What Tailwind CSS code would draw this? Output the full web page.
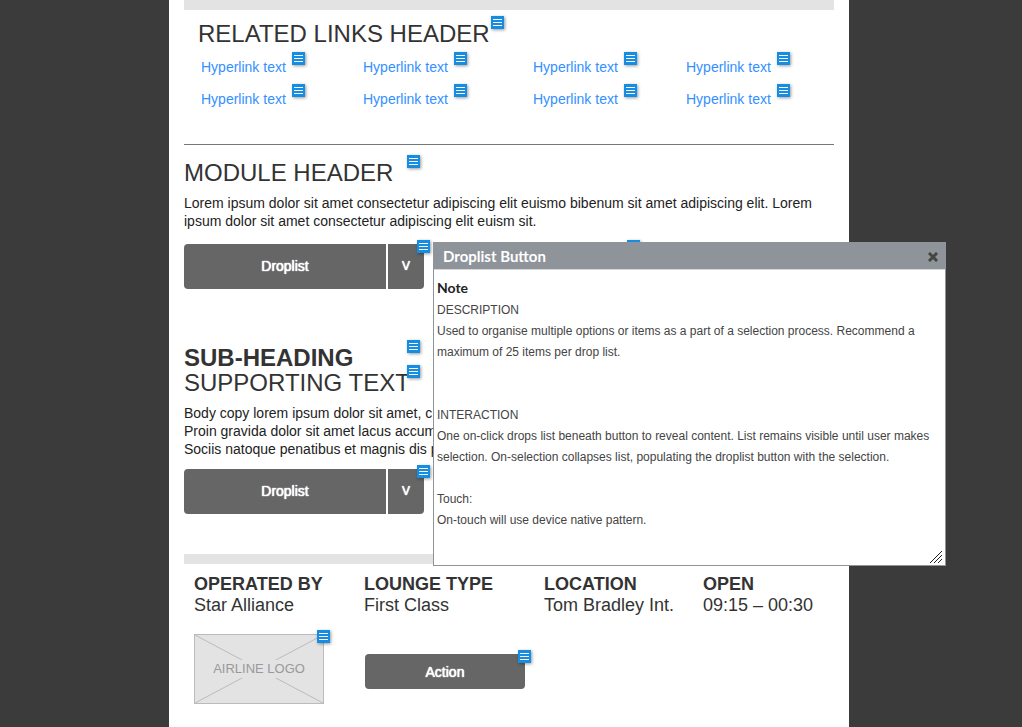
<!DOCTYPE html>
<html lang="en">
<head>
<meta charset="utf-8">
<meta name="viewport" content="width=device-width, initial-scale=1">
<title>Lounge wireframe</title>
<script src="https://cdn.jsdelivr.net/npm/@tailwindcss/browser@4"></script>
</head>
<body class="min-h-screen bg-[#3b3b3b] pr-1 font-['Liberation_Sans',Arial,sans-serif] text-sm leading-[18px] text-[#222]">
<svg class="hidden" aria-hidden="true">
  <symbol id="note" viewBox="0 0 13 13"><path fill="#158de0" d="M0 0h13v13H0z"/><path fill="#fff" d="M2 3h9v1H2zM2 6h9v1H2zM2 9h9v1H2z"/></symbol>
</svg>
<main class="relative mx-auto min-h-screen max-w-[680px] bg-white px-[15px]">
  <div class="h-[10px] bg-[#e3e3e3]"></div>

  <section class="border-b border-[#777] pt-[11px] pb-9 pl-[14px]">
    <h2 class="relative w-fit text-2xl leading-[25px] text-[#333]">RELATED LINKS HEADER
      <button aria-label="Note" class="absolute -top-[5px] left-[293px] size-[13px] shadow-[1px_1px_3px_#0006]"><svg class="size-[13px]"><use href="#note"/></svg></button>
    </h2>
    <ul class="mt-3 grid grid-cols-[162px_170px_153px_1fr] gap-y-[14px] pl-[3px] text-[#3390ff]">
      <li class="relative"><a href="#">Hyperlink text</a><button aria-label="Note" class="absolute -top-[6px] left-[91px] size-[13px] shadow-[1px_1px_3px_#0006]"><svg class="size-[13px]"><use href="#note"/></svg></button></li>
      <li class="relative"><a href="#">Hyperlink text</a><button aria-label="Note" class="absolute -top-[6px] left-[91px] size-[13px] shadow-[1px_1px_3px_#0006]"><svg class="size-[13px]"><use href="#note"/></svg></button></li>
      <li class="relative"><a href="#">Hyperlink text</a><button aria-label="Note" class="absolute -top-[6px] left-[91px] size-[13px] shadow-[1px_1px_3px_#0006]"><svg class="size-[13px]"><use href="#note"/></svg></button></li>
      <li class="relative"><a href="#">Hyperlink text</a><button aria-label="Note" class="absolute -top-[6px] left-[91px] size-[13px] shadow-[1px_1px_3px_#0006]"><svg class="size-[13px]"><use href="#note"/></svg></button></li>
      <li class="relative"><a href="#">Hyperlink text</a><button aria-label="Note" class="absolute -top-[6px] left-[91px] size-[13px] shadow-[1px_1px_3px_#0006]"><svg class="size-[13px]"><use href="#note"/></svg></button></li>
      <li class="relative"><a href="#">Hyperlink text</a><button aria-label="Note" class="absolute -top-[6px] left-[91px] size-[13px] shadow-[1px_1px_3px_#0006]"><svg class="size-[13px]"><use href="#note"/></svg></button></li>
      <li class="relative"><a href="#">Hyperlink text</a><button aria-label="Note" class="absolute -top-[6px] left-[91px] size-[13px] shadow-[1px_1px_3px_#0006]"><svg class="size-[13px]"><use href="#note"/></svg></button></li>
      <li class="relative"><a href="#">Hyperlink text</a><button aria-label="Note" class="absolute -top-[6px] left-[91px] size-[13px] shadow-[1px_1px_3px_#0006]"><svg class="size-[13px]"><use href="#note"/></svg></button></li>
    </ul>
  </section>

  <section class="relative pt-[15px]">
    <h2 class="relative w-fit text-2xl leading-[25px] text-[#333]">MODULE HEADER
      <button aria-label="Note" class="absolute -top-[5px] left-[223px] size-[13px] shadow-[1px_1px_3px_#0006]"><svg class="size-[13px]"><use href="#note"/></svg></button>
    </h2>
    <p class="mt-[9px]">Lorem ipsum dolor sit amet consectetur adipiscing elit euismo bibenum sit amet adipiscing elit. Lorem ipsum dolor sit amet consectetur adipiscing elit euism sit.</p>
    <div class="relative mt-[14px] flex h-[45px] w-60 gap-[2px] text-white">
      <select aria-label="Droplist" class="flex-1 appearance-none rounded-l-[4px] bg-[#666] pb-[2px] text-center [text-align-last:center] [text-shadow:0_0_1px_#fff,0_0_1px_#fff]"><option>Droplist</option></select>
      <button aria-label="Open droplist" class="w-9 rounded-r-[4px] bg-[#666] pb-[2px] text-xs [text-shadow:0_0_1px_#fff,0_0_1px_#fff]">V</button>
      <button aria-label="Note" class="absolute -top-1 left-[233px] size-[13px] shadow-[1px_1px_3px_#0006]"><svg class="size-[13px]"><use href="#note"/></svg></button>
    </div>
    <button aria-label="Note" class="absolute top-[95px] left-[443px] size-[13px] shadow-[1px_1px_3px_#0006]"><svg class="size-[13px]"><use href="#note"/></svg></button>
  </section>

  <section class="mt-14">
    <h3 class="relative w-fit text-2xl leading-[25px] font-bold text-[#333]">SUB-HEADING
      <button aria-label="Note" class="absolute -top-[5px] left-[223px] size-[13px] shadow-[1px_1px_3px_#0006]"><svg class="size-[13px]"><use href="#note"/></svg></button>
    </h3>
    <h4 class="relative w-fit text-2xl leading-[25px] text-[#333]">SUPPORTING TEXT
      <button aria-label="Note" class="absolute -top-[5px] left-[223px] size-[13px] shadow-[1px_1px_3px_#0006]"><svg class="size-[13px]"><use href="#note"/></svg></button>
    </h4>
    <p class="mt-[9px]">Body copy lorem ipsum dolor sit amet, c<br>Proin gravida dolor sit amet lacus accum<br>Sociis natoque penatibus et magnis dis p</p>
    <div class="relative mt-[11px] flex h-[45px] w-60 gap-[2px] text-white">
      <select aria-label="Droplist" class="flex-1 appearance-none rounded-l-[4px] bg-[#666] pb-[2px] text-center [text-align-last:center] [text-shadow:0_0_1px_#fff,0_0_1px_#fff]"><option>Droplist</option></select>
      <button aria-label="Open droplist" class="w-9 rounded-r-[4px] bg-[#666] pb-[2px] text-xs [text-shadow:0_0_1px_#fff,0_0_1px_#fff]">V</button>
      <button aria-label="Note" class="absolute -top-1 left-[233px] size-[13px] shadow-[1px_1px_3px_#0006]"><svg class="size-[13px]"><use href="#note"/></svg></button>
    </div>
  </section>

  <div class="mt-10 h-[10px] bg-[#e3e3e3]"></div>

  <section class="pt-[10px] pl-[10px]">
    <dl class="grid grid-cols-[170px_180px_159px_1fr] text-lg leading-[21px] text-[#333]">
      <div><dt class="font-bold">OPERATED BY</dt><dd>Star Alliance</dd></div>
      <div><dt class="font-bold">LOUNGE TYPE</dt><dd>First Class</dd></div>
      <div><dt class="font-bold">LOCATION</dt><dd>Tom Bradley Int.</dd></div>
      <div><dt class="font-bold">OPEN</dt><dd>09:15 – 00:30</dd></div>
    </dl>
    <div class="mt-[18px] grid grid-cols-[171px_160px] items-start">
      <div class="relative grid h-[70px] w-[130px] place-items-center border border-[#bbb] bg-[#e3e3e3] text-[13px] text-[#999]">
        <svg class="col-start-1 row-start-1 h-[68px] w-32" viewBox="0 0 128 68" stroke="#bbb" aria-hidden="true"><path d="M0 0l128 68M128 0L0 68"/></svg>
        <span class="relative col-start-1 row-start-1 bg-[#e3e3e3]">AIRLINE LOGO</span>
        <button aria-label="Note" class="absolute -top-[5px] left-[122px] size-[13px] shadow-[1px_1px_3px_#0006]"><svg class="size-[13px]"><use href="#note"/></svg></button>
      </div>
      <div class="relative mt-5">
        <button class="h-[35px] w-full rounded-[4px] bg-[#666] text-white [text-shadow:0_0_1px_#fff,0_0_1px_#fff]">Action</button>
        <button aria-label="Note" class="absolute -top-1 left-[153px] size-[13px] shadow-[1px_1px_3px_#0006]"><svg class="size-[13px]"><use href="#note"/></svg></button>
      </div>
    </div>
  </section>

  <!-- Floating note window -->
  <section role="dialog" aria-labelledby="note-title" class="absolute top-[242px] left-[264px] w-[513px] border border-[#8f949a] bg-white pb-[34px] text-xs leading-[21px] text-[#444]">
    <header class="flex h-[27px] items-center justify-between border-b border-[#d5d7da] bg-[#8f949a] pt-px pr-[7px] pl-[9px]">
      <h2 id="note-title" class="font-['Trebuchet_MS','Lato',sans-serif] text-[15px] font-bold text-white">Droplist Button</h2>
      <button aria-label="Close" class="size-[10px]"><svg class="size-[10px]" viewBox="0 0 10 10"><path d="M2 2l6 6M8 2L2 8" stroke="#45463f" stroke-width="3" stroke-linecap="square"/></svg></button>
    </header>
    <div class="pt-[7px] pr-1 pl-[3px]">
      <h3 class="font-['Trebuchet_MS','Lato',sans-serif] text-sm leading-[22px] font-bold text-[#222]">Note</h3>
      <div class="pt-px">
        <p>DESCRIPTION</p>
        <p>Used to organise multiple options or items as a part of a selection process. Recommend a maximum of 25 items per drop list.</p>
        <p class="mt-[42px]">INTERACTION</p>
        <p>One on-click drops list beneath button to reveal content. List remains visible until user makes selection. On-selection collapses list, populating the droplist button with the selection.</p>
        <p class="mt-[21px]">Touch:</p>
        <p>On-touch will use device native pattern.</p>
      </div>
    </div>
    <svg class="absolute right-[3px] bottom-[2px] size-3 cursor-se-resize" viewBox="0 0 12 12" stroke="#222" aria-hidden="true"><path d="M0 12L12 0M4 12L12 4M8 12L12 8"/></svg>
  </section>
</main>
</body>
</html>
